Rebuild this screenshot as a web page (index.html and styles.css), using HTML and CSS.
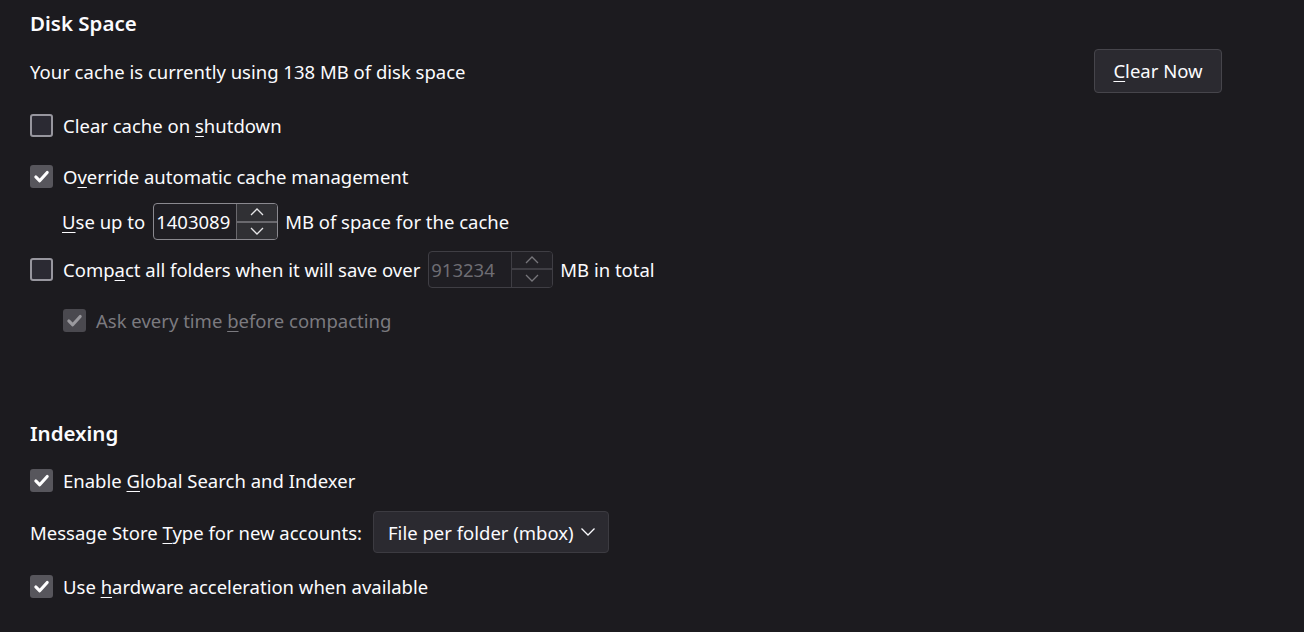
FILE: index.html
```html
<!DOCTYPE html>
<html>
<head>
<meta charset="utf-8">
<link rel="stylesheet" href="styles.css">
</head>
<body>
<div class="page">
  <h2 class="heading first">Disk Space</h2>
  <div class="row cache-row">
    <span class="txt">Your cache is currently using 138 MB of disk space</span>
    <button class="btn"><u>C</u>lear Now</button>
  </div>
  <label class="row check-row r-shutdown">
    <span class="cb"></span>
    <span>Clear cache on <u>s</u>hutdown</span>
  </label>
  <label class="row check-row r-override">
    <span class="cb checked"><svg viewBox="0 0 16 16"><path d="M3.2 8.4 L6.5 11.6 L12.8 4.6" /></svg></span>
    <span>O<u>v</u>erride automatic cache management</span>
  </label>
  <div class="row field-row r-useup">
    <span><u>U</u>se up to</span>
    <span class="num">
      <span class="num-val">1403089</span>
      <span class="spin">
        <span class="spin-btn"><svg viewBox="0 0 16 10"><path d="M2 8 L8 2 L14 8"/></svg></span>
        <span class="spin-btn"><svg viewBox="0 0 16 10"><path d="M2 2 L8 8 L14 2"/></svg></span>
      </span>
    </span>
    <span>MB of space for the cache</span>
  </div>
  <div class="row field-row r-compact">
    <span class="cb"></span>
    <span class="lbl">Comp<u>a</u>ct all folders when it will save over</span>
    <span class="num disabled">
      <span class="num-val">913234</span>
      <span class="spin">
        <span class="spin-btn"><svg viewBox="0 0 16 10"><path d="M2 8 L8 2 L14 8"/></svg></span>
        <span class="spin-btn"><svg viewBox="0 0 16 10"><path d="M2 2 L8 8 L14 2"/></svg></span>
      </span>
    </span>
    <span>MB in total</span>
  </div>
  <label class="row check-row r-ask disabled">
    <span class="cb checked"><svg viewBox="0 0 16 16"><path d="M3.2 8.4 L6.5 11.6 L12.8 4.6" /></svg></span>
    <span>Ask every time <u>b</u>efore compacting</span>
  </label>

  <h2 class="heading second">Indexing</h2>
  <label class="row check-row r-enable">
    <span class="cb checked"><svg viewBox="0 0 16 16"><path d="M3.2 8.4 L6.5 11.6 L12.8 4.6" /></svg></span>
    <span>Enable <u>G</u>lobal Search and Indexer</span>
  </label>
  <div class="row field-row r-store">
    <span>Message Store <u>T</u>ype for new accounts:</span>
    <span class="menulist">File per folder (mbox)<svg viewBox="0 0 16 10"><path d="M1.5 1.5 L8 8 L14.5 1.5"/></svg></span>
  </div>
  <label class="row check-row r-hw">
    <span class="cb checked"><svg viewBox="0 0 16 16"><path d="M3.2 8.4 L6.5 11.6 L12.8 4.6" /></svg></span>
    <span>Use <u>h</u>ardware acceleration when available</span>
  </label>
</div>
</body>
</html>
```
FILE: styles.css
```css
html, body {
  margin: 0;
  padding: 0;
  background: #1c1b1f;
  color: #fbfbfe;
  font-family: "Noto Sans", "Open Sans", sans-serif;
  font-size: 18.5px;
}
.page {
  padding: 9px 82px 0 30px;
}
u {
  text-decoration-thickness: 1px;
  text-underline-offset: 3px;
}
.heading {
  margin: 0;
  height: 28px;
  line-height: 28px;
  font-size: 20.5px;
  font-weight: 600;
}
.heading.second { margin-top: 84px; }
.row {
  display: flex;
  align-items: center;
}
.cache-row {
  margin-top: 12px;
  height: 43px;
  justify-content: space-between;
}
.cache-row .txt { padding-top: 2px; }
.btn {
  font: inherit;
  color: #fbfbfe;
  background: #2b2a30;
  border: 1px solid #46454b;
  border-radius: 4px;
  height: 44px;
  width: 128px;
  padding: 0;
}
.check-row { height: 30px; gap: 10px; }
.r-shutdown { margin-top: 18px; }
.r-override { margin-top: 21px; }
.r-useup { margin-top: 12px; height: 37px; padding-left: 32px; }
.r-compact { margin-top: 10px; height: 38px; }
.r-compact .lbl { margin-left: 10px; }
.r-ask { margin-top: 17px; padding-left: 33px; }
.r-enable { margin-top: 18px; }
.r-store { margin-top: 16px; height: 42px; }
.r-hw { margin-top: 18px; }

.cb {
  box-sizing: border-box;
  width: 23px;
  height: 23px;
  border: 2px solid #97969e;
  border-radius: 3px;
  background: #2b2a33;
  display: flex;
  align-items: center;
  justify-content: center;
  flex: none;
}
.cb.checked {
  border: none;
  background: #57565c;
}
.cb svg {
  width: 19px;
  height: 19px;
  fill: none;
  stroke: #ffffff;
  stroke-width: 2.6;
  stroke-linecap: round;
  stroke-linejoin: round;
}
.disabled { color: #7b7a7f; }
.r-ask .cb.checked { background: #4a494f; }
.r-ask .cb svg { stroke: #9a999e; }

.num {
  box-sizing: border-box;
  display: flex;
  width: 125px;
  height: 37px;
  border: 1px solid #8a898f;
  border-radius: 4px;
  background: #1f1e23;
  margin: 0 7px 0 8px;
  overflow: hidden;
}
.num-val {
  width: 82px;
  overflow: hidden;
  white-space: nowrap;
  padding-left: 2px;
  line-height: 35px;
  box-sizing: border-box;
}
.spin {
  flex: 1;
  display: flex;
  flex-direction: column;
  border-left: 1px solid #6a696e;
}
.spin-btn {
  flex: 1;
  background: #303034;
  display: flex;
  align-items: center;
  justify-content: center;
}
.spin-btn + .spin-btn { border-top: 2px solid #6a696e; }
.spin-btn svg {
  width: 16px;
  height: 10px;
  fill: none;
  stroke: #e6e6e8;
  stroke-width: 1.3;
}
.num.disabled {
  border-color: #3f3e44;
  color: #6e6d73;
}
.num.disabled .spin { border-left-color: #3f3e44; }
.num.disabled .spin-btn { background: #222126; }
.num.disabled .spin-btn + .spin-btn { border-top-color: #3f3e44; }
.num.disabled .spin-btn svg { stroke: #77767b; }

.menulist {
  box-sizing: border-box;
  display: flex;
  align-items: center;
  height: 42px;
  width: 236px;
  margin-left: 11px;
  padding-left: 14px;
  background: #2b2a30;
  border: 1px solid #3c3b41;
  border-radius: 4px;
}
.menulist svg {
  width: 16px;
  height: 10px;
  margin-left: 6px;
  fill: none;
  stroke: #fbfbfe;
  stroke-width: 1.3;
}
```
